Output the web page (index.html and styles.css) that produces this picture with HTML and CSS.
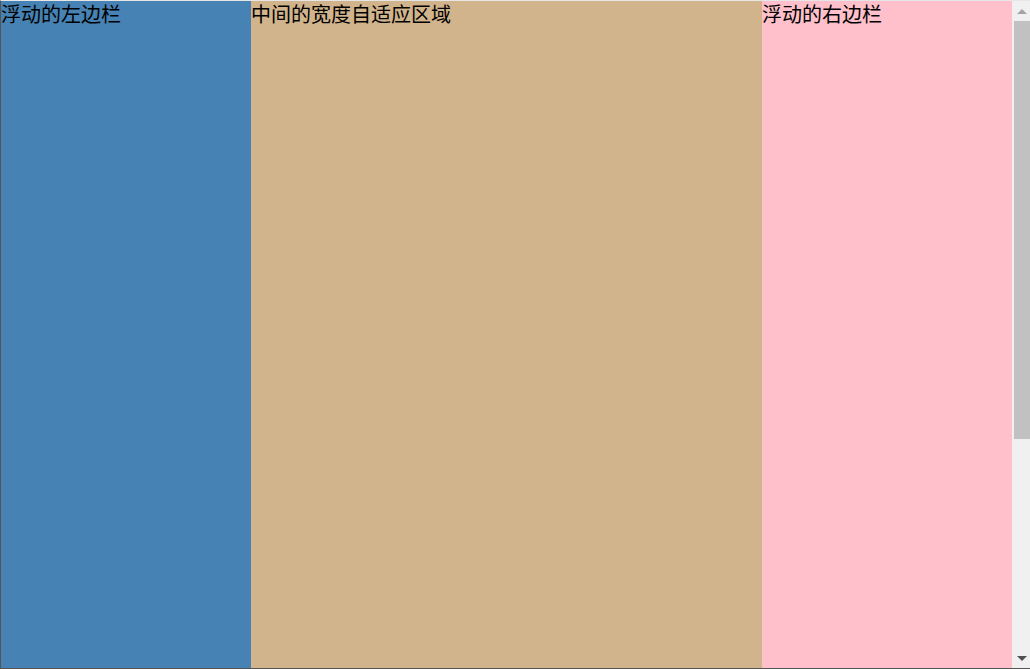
FILE: index.html
```html
<!DOCTYPE html>
<html lang="zh">
<head>
<meta charset="utf-8">
<title>三栏布局</title>
<link rel="stylesheet" href="styles.css">
</head>
<body>
<div class="frame">
  <div class="col left">浮动的左边栏</div>
  <div class="col main">中间的宽度自适应区域</div>
  <div class="col right">浮动的右边栏</div>
  <div class="scrollbar">
    <div class="arrow up"></div>
    <div class="thumb"></div>
    <div class="track"></div>
    <div class="arrow down"></div>
  </div>
</div>
</body>
</html>
```
FILE: styles.css
```css
html, body {
  margin: 0;
  padding: 0;
  overflow: hidden;
}
body {
  font-family: "Noto Sans CJK SC", "Liberation Sans", sans-serif;
  font-size: 20px;
  line-height: 26px;
  color: #000;
  background: #fff;
}
.frame {
  display: flex;
  width: 1030px;
  height: 669px;
  box-sizing: border-box;
  border-top: 1px solid #e6e6e6;
  border-left: 1px solid #555;
  border-bottom: 1px solid #555;
}
.col {
  padding-top: 0;
}
.left {
  width: 250px;
  background: #4682b4;
}
.main {
  flex: 1;
  background: #d2b48c;
}
.right {
  width: 250px;
  background: #ffc0cb;
}
.scrollbar {
  width: 18px;
  background: #f0f0f0;
  display: flex;
  flex-direction: column;
  align-items: flex-end;
}
.arrow {
  width: 16px;
  height: 20px;
  display: flex;
  align-items: center;
  justify-content: center;
}
.arrow::before {
  content: "";
  width: 0;
  height: 0;
  border-left: 5px solid transparent;
  border-right: 5px solid transparent;
}
.up::before {
  border-bottom: 5px solid #a3a3a3;
}
.down::before {
  border-top: 5px solid #505050;
}
.thumb {
  width: 16px;
  height: 418px;
  background: #c1c1c1;
}
.track {
  flex: 1;
}
```
